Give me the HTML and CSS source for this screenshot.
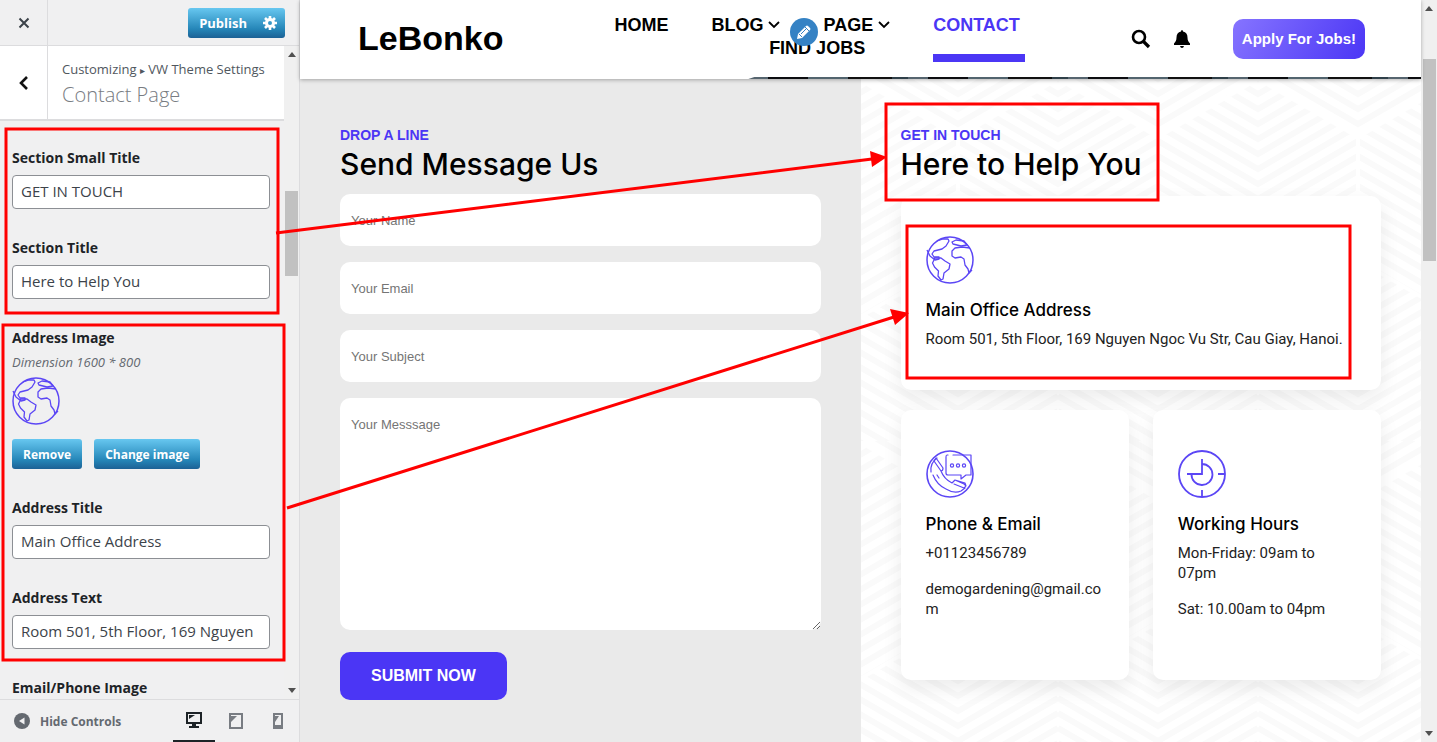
FILE: index.html
```html
<!doctype html>
<html lang="en">
<head>
  <meta charset="UTF-8">
  <title>Customize: LeBonko</title>
  <link rel="stylesheet" href="styles.css">
</head>
<body>
  <svg class="defs" aria-hidden="true">
    <symbol id="globe" viewBox="0 0 48 48">
      <g fill="none" stroke="#5b46f5" stroke-width="1.3" stroke-linejoin="round">
        <circle cx="24" cy="24" r="23" stroke-width="1.5"/>
        <path d="M11 5l6-2 5 0 1 2-3 5-4 3-8 2-2 3 2 3 5 0v2l-4 1-5-4-3-6"/>
        <path d="M8 22l7 0 4 3 5 3-1 5-5 4-1 6-2 1-3-4 .5-5-4-4-2-4 2-4z"/>
        <path d="M26 6l4-2 8 1 3 4-6 1-8-2z"/>
        <path d="M44 12l-8-1-7 1-3 3v5l3 2 6-1 3 2 1 6 3 4 1 4 3-3"/>
      </g>
    </symbol>
    <symbol id="phone" viewBox="0 0 48 48">
      <g fill="none" stroke="#5b46f5" stroke-width="1.2" stroke-linejoin="round" stroke-linecap="round">
        <circle cx="24" cy="24" r="23" stroke-width="1.6"/>
        <path d="M22 5h-1q-1 0-1 2v16q0 2 2 2h13v4l5-4h5V5H27"/>
        <circle cx="26" cy="15.500" r="1.600"/><circle cx="32" cy="15.500" r="1.600"/><circle cx="38" cy="15.500" r="1.600"/>
        <path d="M11 8q-7 5-6 14M7 25q4 10 13 14 8 5 15 2l4-3"/>
        <path d="M10 8l7 10q0 3-2 3L8 11zM15 21q3 8 11 12l3-3 9 4q3 2 0 4l-10-4M29 30l10 3 1 3M11 25l2 3"/>
      </g>
    </symbol>
    <symbol id="clock" viewBox="0 0 48 48">
      <g fill="none" stroke="#5b46f5" stroke-width="1.800">
        <circle cx="24" cy="24" r="23"/>
        <path d="M24 9v15H9M24 14a10.500 10.500 0 1 1-10.500 10M40 24h7M24 40v7"/>
      </g>
    </symbol>
    <symbol id="chevron" viewBox="0 0 12 8">
      <path d="M1 1l5 5 5-5" fill="none" stroke="#000" stroke-width="1.800"/>
    </symbol>
  </svg>

  <div class="customizer">
    <aside class="sidebar">
      <div class="top-bar">
        <button class="close" type="button" aria-label="Close">
          <svg width="12" height="12" viewBox="0 0 12 12"><path d="M1.500 1.500l9 9M10.500 1.500l-9 9" stroke="#3c434a" stroke-width="2"/></svg>
        </button>
        <button class="primary publish" type="button">Publish
          <svg width="14" height="14" viewBox="0 0 14 14"><circle cx="7" cy="7" r="3.500" fill="none" stroke="#fff" stroke-width="3"/><path d="M7 0v3M7 11v3M0 7h3M11 7h3M2 2l2 2M10 10l2 2M12 2l-2 2M4 10l-2 2" stroke="#fff" stroke-width="2.600"/></svg>
        </button>
      </div>

      <div class="pane">
        <div class="pane-content">
          <div class="panel-title">
            <button class="back" type="button" aria-label="Back">
              <svg width="10" height="14" viewBox="0 0 10 14"><path d="M8 1L2 7l6 6" fill="none" stroke="#111" stroke-width="2.600"/></svg>
            </button>
            <div class="crumbs">
              <p>Customizing <span class="arrow">▸</span> VW Theme Settings</p>
              <h3>Contact Page</h3>
            </div>
          </div>
          <form class="controls">
            <div class="control">
              <label for="small-title">Section Small Title</label>
              <input type="text" id="small-title" value="GET IN TOUCH">
            </div>
            <div class="control">
              <label for="section-title">Section Title</label>
              <input type="text" id="section-title" value="Here to Help You">
            </div>
            <div class="control">
              <span class="label">Address Image</span>
              <em>Dimension 1600 * 800</em>
              <svg class="thumb-image" width="48" height="48"><use href="#globe"/></svg>
              <div class="image-actions">
                <button class="primary" type="button">Remove</button>
                <button class="primary" type="button">Change image</button>
              </div>
            </div>
            <div class="control">
              <label for="address-title">Address Title</label>
              <input type="text" id="address-title" value="Main Office Address">
            </div>
            <div class="control">
              <label for="address-text">Address Text</label>
              <input type="text" id="address-text" value="Room 501, 5th Floor, 169 Nguyen Ngoc Vu Str, Cau Giay, Hanoi.">
            </div>
            <div class="control">
              <span class="label">Email/Phone Image</span>
            </div>
          </form>
        </div>
        <div class="scrollbar pane-scroll" aria-hidden="true">
          <i class="up"></i><i class="thumb"></i><i class="down"></i>
        </div>
      </div>

      <div class="bottom-bar">
        <button class="hide-controls" type="button">
          <svg width="16" height="16" viewBox="0 0 16 16"><circle cx="8" cy="8" r="8" fill="#646970"/><path d="M10.500 4.500v7L5 8z" fill="#f0f0f1"/></svg>
          Hide Controls
        </button>
        <div class="devices">
          <button class="active" type="button" aria-label="Desktop">
            <svg width="16" height="16" viewBox="0 0 16 16"><path d="M0 0h16v12h-6v2h3v2H3v-2h3v-2H0z" fill="#1d2327"/><path d="M2 2h12v8H2z" fill="#f0f0f1"/><path d="M3 3h6L3 7z" fill="#1d2327"/></svg>
          </button>
          <button type="button" aria-label="Tablet">
            <svg width="16" height="16" viewBox="0 0 16 16"><path d="M1 0h14v16H1z" fill="#787c82"/><path d="M3 2h10v12H3z" fill="#f0f0f1"/><path d="M3 3h6L3 9z" fill="#787c82"/></svg>
          </button>
          <button type="button" aria-label="Mobile">
            <svg width="16" height="16" viewBox="0 0 16 16"><path d="M3 0h10v16H3z" fill="#787c82"/><path d="M5 2h6v10H5z" fill="#f0f0f1"/><path d="M5 3h4L5 9z" fill="#787c82"/></svg>
          </button>
        </div>
      </div>
    </aside>

    <main class="preview">
      <header class="site-header">
        <a class="logo" href="#">LeBonko</a>
        <nav>
          <a href="#">HOME</a>
          <a href="#">BLOG <svg width="12" height="8"><use href="#chevron"/></svg></a>
          <a href="#">PAGE <svg width="12" height="8"><use href="#chevron"/></svg></a>
          <a class="current" href="#">CONTACT</a>
          <a href="#">FIND JOBS</a>
          <button class="edit-shortcut" type="button" aria-label="Edit menu">
            <svg width="16" height="16" viewBox="0 0 16 16"><path d="M1 15l1-5 8-8q1-1 2 0l2 2q1 1 0 2l-8 8z" fill="#fff"/><path d="M5 10l6-6M3 10l3 3M9 3l4 4" stroke="#3582c4" stroke-width="1"/></svg>
          </button>
        </nav>
        <div class="header-icons">
          <a href="#" aria-label="Search"><svg width="20" height="20" viewBox="0 0 20 20"><circle cx="8" cy="8" r="6" fill="none" stroke="#000" stroke-width="2.600"/><path d="M12 12l6 6" stroke="#000" stroke-width="3.200"/></svg></a>
          <a href="#" aria-label="Notifications"><svg width="16" height="18" viewBox="0 0 16 18"><path d="M8 0q1 0 1 1.500c3 .5 4.500 3 4.500 6 0 3 1 4.500 2.500 6V15H0v-1.500c1.500-1.500 2.500-3 2.500-6 0-3 1.500-5.500 4.500-6Q7 0 8 0zM6 16h4q-.5 2-2 2t-2-2z"/></svg></a>
        </div>
        <a class="apply" href="#">Apply For Jobs!</a>
      </header>

      <div class="contact">
        <section class="message">
          <h6>DROP A LINE</h6>
          <h2>Send Message Us</h2>
          <form>
            <input type="text" placeholder="Your Name" aria-label="Your Name">
            <input type="email" placeholder="Your Email" aria-label="Your Email">
            <input type="text" placeholder="Your Subject" aria-label="Your Subject">
            <textarea placeholder="Your Messsage" aria-label="Your Messsage"></textarea>
            <button class="submit" type="button">SUBMIT NOW</button>
          </form>
        </section>

        <section class="info">
          <svg class="info-pattern" width="100%" height="100%" aria-hidden="true">
            <defs>
              <pattern id="stripes-a" width="200" height="15" patternUnits="userSpaceOnUse">
                <path d="M0-58L100 0 200-58M0-43L100 15 200-43M0-28L100 30 200-28M0-13L100 45 200-13M0 2L100 60 200 2M0 17L100 75 200 17" fill="none" stroke="#fafafa" stroke-width="6"/>
              </pattern>
              <pattern id="stripes-b" x="100" width="200" height="15" patternUnits="userSpaceOnUse">
                <path d="M0-58L100 0 200-58M0-43L100 15 200-43M0-28L100 30 200-28M0-13L100 45 200-13M0 2L100 60 200 2M0 17L100 75 200 17" fill="none" stroke="#fafafa" stroke-width="6"/>
              </pattern>
              <pattern id="weave" x="-3" width="200" height="362" patternUnits="userSpaceOnUse">
                <rect width="200" height="362" fill="url(#stripes-a)"/>
                <path d="M0 0L100 58V181L0 239-100 181V58zM200 0L300 58V181L200 239 100 181V58z" fill="#fff"/>
                <path d="M0 0L100 58V181L0 239-100 181V58zM200 0L300 58V181L200 239 100 181V58z" fill="url(#stripes-b)" stroke="#fff" stroke-width="4"/>
              </pattern>
            </defs>
            <rect width="100%" height="100%" fill="url(#weave)"/>
          </svg>
          <h6>GET IN TOUCH</h6>
          <h2>Here to Help You</h2>
          <div class="cards">
            <div class="card wide">
              <svg width="48" height="48"><use href="#globe"/></svg>
              <h4>Main Office Address</h4>
              <p>Room 501, 5th Floor, 169 Nguyen Ngoc Vu Str, Cau Giay, Hanoi.</p>
            </div>
            <div class="card">
              <svg width="48" height="48"><use href="#phone"/></svg>
              <h4>Phone &amp; Email</h4>
              <p>+01123456789</p>
              <p>demogardening@gmail.com</p>
            </div>
            <div class="card">
              <svg width="48" height="48"><use href="#clock"/></svg>
              <h4>Working Hours</h4>
              <p>Mon-Friday: 09am to 07pm</p>
              <p>Sat: 10.00am to 04pm</p>
            </div>
          </div>
        </section>
      </div>
    </main>

    <div class="scrollbar page-scroll" aria-hidden="true">
      <i class="up"></i><i class="thumb"></i><i class="down"></i>
    </div>
  </div>

  <!-- callouts linking each setting to its place in the preview -->
  <svg class="callouts" width="1437" height="742" aria-hidden="true">
    <g fill="none" stroke="#f00" stroke-width="3">
      <rect x="6" y="129" width="272" height="184"/>
      <rect x="3" y="325" width="281" height="335"/>
      <rect x="886" y="104" width="272" height="96"/>
      <rect x="907" y="226" width="443" height="152"/>
      <path d="M276 233L872 159M287 508L894 317"/>
    </g>
    <path d="M887 157L870 151 872 167zM909 313L890 309 895 325z" fill="#f00"/>
  </svg>
</body>
</html>
```
FILE: styles.css
```css
* {
  box-sizing: border-box;
}
body {
  margin: 0;
  overflow: hidden;
  font-family: "Liberation Sans", Arial, sans-serif;
  color: #000;
}
h2, h3, h4, h6, p {
  margin: 0;
}
button, input, textarea {
  font-family: inherit;
}
button {
  padding: 0;
  border: 0;
  background: none;
  cursor: pointer;
}
a {
  color: inherit;
  text-decoration: none;
}
svg {
  display: block;
}
.defs {
  position: absolute;
  width: 0;
  height: 0;
}
.customizer {
  display: flex;
  height: 100vh;
}

/* sidebar */
.sidebar {
  display: flex;
  flex-direction: column;
  flex: 0 0 300px;
  background: #f0f0f1;
  border-right: 1px solid #dcdcde;
  font-family: "Open Sans", "Noto Sans", sans-serif;
}
.top-bar {
  display: flex;
  align-items: center;
  justify-content: space-between;
  flex: 0 0 46px;
  padding-right: 14px;
  border-bottom: 1px solid #dcdcde;
}
.close {
  display: grid;
  place-items: center;
  width: 48px;
  height: 45px;
  border-right: 1px solid #dcdcde;
}
.primary {
  height: 30px;
  padding: 0 11px;
  border-radius: 3px;
  background: linear-gradient(#67c7f0, #2586b8 70%, #1c6195);
  color: #fff;
  font-size: 12px;
  font-weight: 700;
}
.publish {
  display: flex;
  align-items: center;
  gap: 16px;
  padding-right: 8px;
  font-size: 13px;
}
.pane {
  display: flex;
  flex: 1;
  min-height: 0;
}
.pane-content {
  flex: 1;
  overflow: hidden;
}
.panel-title {
  display: flex;
  height: 75px;
  background: #fff;
  border-bottom: 2px solid #dcdcde;
}
.back {
  display: grid;
  place-items: center;
  width: 48px;
  border-right: 1px solid #dcdcde;
}
.crumbs {
  padding: 14px;
  color: #50575e;
  white-space: nowrap;
}
.crumbs p {
  font-size: 13px;
  line-height: 18px;
}
.crumbs .arrow {
  font-family: "DejaVu Sans", sans-serif;
  font-size: 10px;
}
.crumbs h3 {
  color: #787c82;
  font-size: 20px;
  font-weight: 300;
  line-height: 30px;
}
.controls {
  padding: 28px 14px 0 12px;
}
.control {
  margin-bottom: 30px;
}
.control label,
.control .label {
  display: block;
  margin-bottom: 8px;
  color: #1d2327;
  font-size: 14px;
  font-weight: 700;
  line-height: 18px;
}
.control input {
  display: block;
  width: 100%;
  height: 34px;
  padding: 0 12px 2px 8px;
  border: 1px solid #8c8f94;
  border-radius: 4px;
  background: #fff;
  color: #3c434a;
  font-size: 15px;
}
.control em {
  display: block;
  margin: -2px 0 6px;
  color: #646970;
  font-size: 13px;
  line-height: 18px;
}
.image-actions {
  display: flex;
  gap: 12px;
  margin-top: 14px;
}
.bottom-bar {
  display: flex;
  justify-content: space-between;
  flex: 0 0 43px;
  padding-left: 14px;
  border-top: 1px solid #dcdcde;
}
.hide-controls {
  display: flex;
  align-items: center;
  gap: 10px;
  color: #646970;
  font-size: 12px;
  font-weight: 700;
}
.devices {
  display: flex;
}
.devices button {
  display: grid;
  place-items: center;
  width: 42px;
}
.devices .active {
  border-bottom: 2px solid #1d2327;
}

/* scrollbars */
.scrollbar {
  display: flex;
  flex-direction: column;
  align-items: center;
  background: #f0f0f0;
}
.scrollbar i {
  border: 4px solid transparent;
}
.scrollbar .up {
  border-top: 0;
  border-bottom: 5px solid #505050;
}
.scrollbar .down {
  margin-top: auto;
  border-bottom: 0;
  border-top: 5px solid #505050;
}
.scrollbar .thumb {
  width: 13px;
  border: 0;
  background: #c1c1c1;
}
.pane-scroll {
  width: 15px;
  padding: 6px 0;
}
.pane-scroll .thumb {
  height: 85px;
  margin-top: 134px;
}
.page-scroll {
  flex: 0 0 16px;
  padding: 6px 0;
}
.page-scroll .thumb {
  height: 202px;
  margin-top: 48px;
}

/* site header */
.preview {
  display: flex;
  flex-direction: column;
  flex: 1;
  min-width: 0;
}
.site-header {
  position: relative;
  z-index: 1;
  display: flex;
  align-items: center;
  height: 79px;
  padding: 0 56px 2px 58px;
  background: #fff;
  box-shadow: 0 1px 4px rgba(0, 0, 0, 0.3);
}
/* sliver of the banner photo showing below the header */
.site-header::after {
  content: "";
  position: absolute;
  right: 0;
  bottom: 0;
  left: 40%;
  height: 2px;
  background: repeating-linear-gradient(90deg, #56656f 0 20px, #0c0d10 20px 60px, #52646e 60px 100px, #111 100px 144px, #2f4049 144px 160px);
  clip-path: polygon(6px 0, 100% 0, 100% 100%, 0 100%);
}
.logo {
  font-size: 34px;
  font-weight: 700;
}
nav {
  position: relative;
  display: flex;
  flex-wrap: wrap;
  justify-content: center;
  align-content: flex-start;
  column-gap: 43px;
  width: 440px;
  height: 50px;
  margin: 0 auto;
  font-size: 18px;
  font-weight: 700;
  line-height: 23px;
}
nav a svg {
  display: inline-block;
  margin-bottom: 2px;
}
nav .current {
  position: relative;
  color: #4b36f5;
}
nav .current::after {
  content: "";
  position: absolute;
  top: 40px;
  left: 0;
  width: 92px;
  height: 8px;
  background: #4b36f5;
}
.edit-shortcut {
  position: absolute;
  top: 4px;
  left: 193px;
  display: grid;
  place-items: center;
  width: 28px;
  height: 28px;
  border-radius: 50%;
  background: #3582c4;
}
.header-icons {
  display: flex;
  align-items: center;
  gap: 23px;
  margin-right: 43px;
}
.apply {
  padding: 0 9px;
  border-radius: 10px;
  background: linear-gradient(120deg, #8674ff, #4b36f5);
  color: #fff;
  font-size: 15px;
  font-weight: 700;
  line-height: 40px;
}

/* contact page */
.contact {
  display: grid;
  grid-template-columns: 1fr 1fr;
  flex: 1;
}
.contact section {
  padding: 47px 40px 0;
}
.contact h6 {
  color: #4b36f5;
  font-size: 14px;
  font-weight: 700;
  line-height: 18px;
}
.contact h2 {
  font-family: Inter, "Liberation Sans", sans-serif;
  font-size: 30px;
  font-weight: 500;
  line-height: 40px;
}
.message {
  background: #eaeaea;
}
.message form {
  margin-top: 10px;
}
.message input,
.message textarea {
  display: block;
  width: 100%;
  height: 52px;
  margin-bottom: 16px;
  padding: 0 11px;
  border: 0;
  border-radius: 10px;
  background: #fff;
  font-size: 13px;
}
.message textarea {
  height: 232px;
  margin-bottom: 22px;
  padding-top: 19px;
}
.message ::placeholder {
  color: #757575;
}
.submit {
  height: 48px;
  padding: 0 31px;
  border-radius: 10px;
  background: #4b36f5;
  color: #fff;
  font-size: 16px;
  font-weight: 700;
}
.info {
  position: relative;
  background: #fff;
}
.info-pattern {
  position: absolute;
  inset: 0;
}
.info h6,
.info h2,
.cards {
  position: relative;
}
.cards {
  display: grid;
  grid-template-columns: 1fr 1fr;
  gap: 20px 24px;
  margin-top: 12px;
}
.card {
  min-height: 270px;
  padding: 40px 25px;
  border-radius: 10px;
  background: #fff;
  box-shadow: 0 8px 20px rgba(0, 0, 0, 0.08);
}
.card.wide {
  grid-column: 1 / -1;
  min-height: 194px;
  padding-bottom: 20px;
}
.card h4 {
  margin: 15px 0 8px;
  font-family: Inter, "Liberation Sans", sans-serif;
  font-size: 17px;
  font-weight: 500;
  line-height: 22px;
}
.card p {
  margin-bottom: 16px;
  color: #222;
  font-family: Roboto, "Liberation Sans", sans-serif;
  font-size: 15px;
  line-height: 20px;
  overflow-wrap: anywhere;
}
.card.wide p {
  white-space: nowrap;
}

.callouts {
  position: absolute;
  top: 0;
  left: 0;
  pointer-events: none;
}
```
